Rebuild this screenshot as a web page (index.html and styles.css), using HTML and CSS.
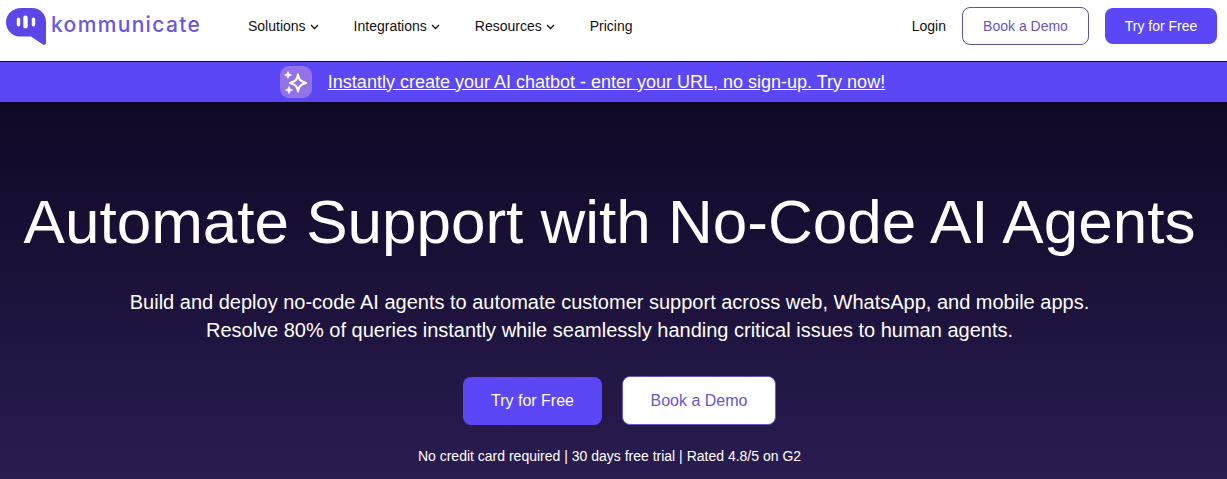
FILE: index.html
```html
<!DOCTYPE html>
<html lang="en">
<head>
<meta charset="utf-8">
<title>Kommunicate</title>
<link rel="stylesheet" href="styles.css">
</head>
<body>
<header class="nav">
  <a class="logo" href="#">
    <svg class="logo-mark" width="40" height="37" viewBox="0 0 40 37">
      <path d="M15 0H26C34 0 40 6 40 14V34.500C40 36.500 38.500 37.500 36.500 36.200L25 28.500H14C6 28.500 0 22 0 14.200C0 6.500 6.500 0 15 0Z" fill="#5b47e8"/>
      <rect x="10.800" y="9.500" width="3.400" height="9" rx="1.700" fill="#fff"/>
      <rect x="17.300" y="7.500" width="4.400" height="13" rx="2.200" fill="#fff"/>
      <rect x="25.800" y="9.500" width="3.400" height="9" rx="1.700" fill="#fff"/>
    </svg>
    <span class="logo-text">kommunicate</span>
  </a>
  <nav class="menu">
    <a href="#" class="menu-item">Solutions <svg class="chev" viewBox="0 0 9 6" width="9" height="6"><path d="M1 1l3.500 3.500L8 1" fill="none" stroke="#111" stroke-width="1.300"/></svg></a>
    <a href="#" class="menu-item">Integrations <svg class="chev" viewBox="0 0 9 6" width="9" height="6"><path d="M1 1l3.500 3.500L8 1" fill="none" stroke="#111" stroke-width="1.300"/></svg></a>
    <a href="#" class="menu-item">Resources <svg class="chev" viewBox="0 0 9 6" width="9" height="6"><path d="M1 1l3.500 3.500L8 1" fill="none" stroke="#111" stroke-width="1.300"/></svg></a>
    <a href="#" class="menu-item">Pricing</a>
  </nav>
  <div class="actions">
    <a href="#" class="login">Login</a>
    <a href="#" class="btn btn-outline">Book a Demo</a>
    <a href="#" class="btn btn-solid">Try for Free</a>
  </div>
</header>
<div class="banner">
  <span class="spark">
    <svg width="26" height="26" viewBox="0 0 26 26" fill="#fff">
      <path d="M15 5.500C15.800 10.800 17.200 12.200 23 14C17.200 15.800 15.800 17.200 15 22.500C14.200 17.200 12.800 15.800 7 14C12.800 12.200 14.200 10.800 15 5.500Z" fill="none" stroke="#fff" stroke-width="2.200" stroke-linejoin="round"/>
      <path d="M5 2.500L6 5 8.500 6 6 7 5 9.500 4 7 1.500 6 4 5Z" stroke="#fff" stroke-width=".7" stroke-linejoin="round"/>
      <path d="M6 17.500L7 20 9.500 21 7 22 6 24.500 5 22 2.500 21 5 20Z" stroke="#fff" stroke-width=".7" stroke-linejoin="round"/>
    </svg>
  </span>
  <a href="#" class="banner-link">Instantly create your AI chatbot - enter your URL, no sign-up. Try now!</a>
</div>
<main class="hero">
  <h1>Automate Support with No-Code AI Agents</h1>
  <p class="lead">Build and deploy no-code AI agents to automate customer support across web, WhatsApp, and mobile apps.<br>Resolve 80% of queries instantly while seamlessly handing critical issues to human agents.</p>
  <div class="cta">
    <a href="#" class="btn-lg btn-lg-solid">Try for Free</a>
    <a href="#" class="btn-lg btn-lg-white">Book a Demo</a>
  </div>
  <p class="note">No credit card required | 30 days free trial | Rated 4.8/5 on G2</p>
</main>
</body>
</html>
```
FILE: styles.css
```css
* { box-sizing: border-box; }
html, body { margin: 0; height: 100%; overflow: hidden; }
body { font-family: "Liberation Sans", Arial, sans-serif; background: #110a26; color: #fff; }
a { text-decoration: none; color: inherit; }

.nav { height: 62px; background: #fff; border-bottom: 1px solid #111; display: flex; align-items: center; padding: 0 10px 9px 6px; color: #111; }
.logo { display: flex; align-items: flex-start; gap: 5px; width: 242px; flex: none; }
.logo-mark { display: block; margin-top: 1px; }
.logo-text { font-family: "Inter", sans-serif; font-size: 21px; font-weight: 500; letter-spacing: 1.350px; color: #6a56e0; line-height: 26px; margin-top: 5px; }
.menu { display: flex; gap: 35px; font-size: 14px; }
.menu-item { display: flex; align-items: center; gap: 4px; white-space: nowrap; }
.chev { display: block; margin-top: 1px; }
.actions { margin-left: auto; display: flex; align-items: center; font-size: 14px; }
.login { margin-right: 16px; }
.btn { display: flex; align-items: center; justify-content: center; border-radius: 8px; }
.btn-outline { width: 127px; height: 38px; border: 1px solid #63529c; color: #6a56b8; margin-right: 16px; }
.btn-solid { width: 112px; height: 36px; background: #5b47f5; color: #fff; }

.banner { height: 40px; background: #5b47f5; display: flex; align-items: center; justify-content: center; gap: 16px; padding-right: 62px; }
.spark { width: 32px; height: 32px; border-radius: 9px; background: #9272e6; display: flex; align-items: center; justify-content: center; }
.banner-link { font-size: 18px; color: #fff; text-decoration: underline; }

.hero { height: 377px; background: linear-gradient(180deg, #0f0825 0%, #2a1c50 100%); display: flex; flex-direction: column; align-items: center; padding: 85px 8px 0 0; text-align: center; }
h1 { margin: 0; font-size: 62px; font-weight: 400; line-height: 70px; letter-spacing: 0; white-space: nowrap; }
.lead { margin: 31px 0 0; font-size: 20px; line-height: 28px; }
.cta { display: flex; align-items: flex-start; gap: 20px; margin: 33px 0 0 20px; font-size: 16px; }
.btn-lg { display: flex; align-items: center; justify-content: center; height: 48px; border-radius: 8px; }
.btn-lg-solid { width: 139px; background: #5b47f5; color: #fff; }
.btn-lg-white { width: 154px; height: 49px; margin-top: -1px; background: #fff; color: #6a56c8; border: 1px solid #6a56c8; }
.note { margin: 22px 0 0; font-size: 14px; line-height: 18px; }
```
